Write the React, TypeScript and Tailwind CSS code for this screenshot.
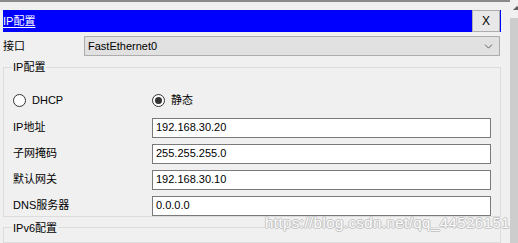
import { ChevronDown } from "lucide-react";

const font = { fontFamily: '"Liberation Sans", "Noto Sans CJK SC", sans-serif' };

function Radio({ checked, label }: { checked?: boolean; label: string }) {
  return (
    <div className="flex items-center gap-[6px]">
      <span className="w-[13px] h-[13px] rounded-full border border-[#333333] bg-white flex items-center justify-center">
        {checked && <span className="w-[7px] h-[7px] rounded-full bg-[#333333]" />}
      </span>
      <span className="text-[11px] text-black">{label}</span>
    </div>
  );
}

function Field({ label, value }: { label: string; value: string }) {
  return (
    <div className="flex items-center h-[20px]">
      <span className="w-[148px] pl-[9px] text-[11px] text-black">{label}</span>
      <div className="w-[339px] h-[20px] bg-white border border-[#7a7a7a] flex items-center pl-[3px] text-[11px] text-black">
        {value}
      </div>
    </div>
  );
}

export default function App() {
  return (
    <div className="w-[518px] h-[243px] bg-[#f0f0f0] flex overflow-hidden relative" style={font}>
      <div className="w-[510px] flex flex-col border-t-2 border-[#8a8a8a]">
        {/* title bar */}
        <div className="mt-[8px] ml-[3px] w-[498px] h-[24px] bg-[#0000ff] flex items-center justify-between">
          <span className="text-white text-[11px] underline underline-offset-2">IP配置</span>
          <button className="mr-[1px] w-[28px] h-[22px] bg-[#e8e8e8] border border-[#adadad] text-[12px] text-black flex items-center justify-center">
            X
          </button>
        </div>

        {/* interface */}
        <div className="mt-[4px] ml-[3px] flex items-center h-[20px]">
          <span className="w-[81px] text-[11px] text-black">接口</span>
          <div className="w-[416px] h-[20px] bg-[#e1e1e1] border border-[#adadad] flex items-center justify-between pl-[3px] pr-[4px] text-[11px] text-black">
            <span>FastEthernet0</span>
            <ChevronDown size={13} strokeWidth={1.5} className="text-[#444444]" />
          </div>
        </div>

        {/* IPv4 group */}
        <fieldset className="mt-[4px] ml-[3px] w-[498px] h-[163px] border border-[#dcdcdc]">
          <legend className="ml-[8px] px-[1px] text-[11px] leading-[14px] text-black">IP配置</legend>
          <div className="flex items-center mt-[18px] pl-[9px]">
            <div className="w-[139px]">
              <Radio label="DHCP" />
            </div>
            <Radio checked label="静态" />
          </div>
          <div className="mt-[9px] flex flex-col gap-[6px]">
            <Field label="IP地址" value="192.168.30.20" />
            <Field label="子网掩码" value="255.255.255.0" />
            <Field label="默认网关" value="192.168.30.10" />
            <Field label="DNS服务器" value="0.0.0.0" />
          </div>
        </fieldset>

        {/* IPv6 group */}
        <fieldset className="mt-[4px] ml-[3px] w-[498px] h-[40px] border border-[#dcdcdc]">
          <legend className="ml-[8px] px-[1px] text-[11px] leading-[14px] text-black">IPv6配置</legend>
        </fieldset>
      </div>

      {/* scrollbar */}
      <div className="w-[8px] flex flex-col">
        <div className="h-[18px] flex items-start justify-end pt-[6px]">
          <span className="w-0 h-0 border-l-[4px] border-r-[4px] border-b-[4px] border-l-transparent border-r-transparent border-b-[#606060] mr-[-3px]" />
        </div>
        <div className="flex-1 bg-[#cdcdcd]" />
      </div>

      <span className="absolute left-[265px] top-[214px] text-[15px] leading-[18px] tracking-[0.45px] text-[#fafafa] [text-shadow:1px_0_0_#c4c4c4,-1px_0_0_#c4c4c4,0_1px_0_#c4c4c4,0_-1px_0_#c4c4c4] pointer-events-none">
        https://blog.csdn.net/qq_44526151
      </span>
    </div>
  );
}
